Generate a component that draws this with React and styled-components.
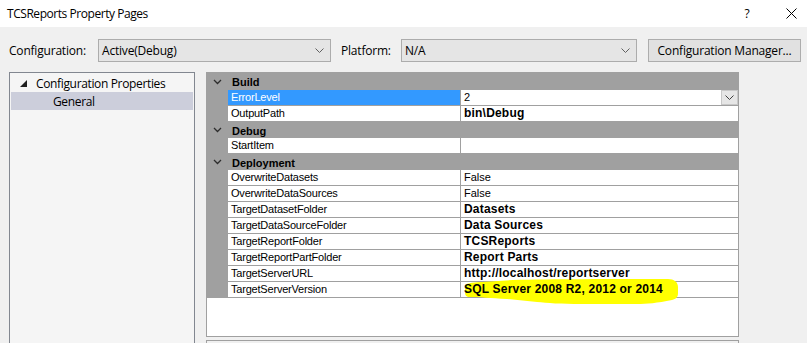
import React from "react";
import styled, { createGlobalStyle } from "styled-components";

const GlobalStyle = createGlobalStyle`
  html, body { margin: 0; padding: 0; }
  body {
    width: 807px;
    height: 343px;
    overflow: hidden;
    background: #f0f0f0;
    font-family: "Open Sans", "Noto Sans", sans-serif;
    color: #000;
  }
`;

const Window = styled.div`
  width: 807px;
  height: 343px;
  overflow: hidden;
  display: flex;
  flex-direction: column;
  background: #f0f0f0;
`;

const TitleBar = styled.div`
  height: 27px;
  flex: none;
  background: #ffffff;
  display: flex;
  align-items: center;
  padding-left: 7px;
  font-size: 12px;
`;

const TitleText = styled.div`
  flex: 1;
  letter-spacing: -0.45px;
`;

const TitleButton = styled.div`
  width: ${(p) => p.$w}px;
  height: 27px;
  display: flex;
  align-items: center;
  justify-content: center;
  font-size: 12px;
`;

const Toolbar = styled.div`
  display: flex;
  align-items: center;
  margin-top: 12px;
  padding-left: 9px;
  height: 23px;
  flex: none;
  font-size: 12px;
`;

const Label = styled.div`
  width: ${(p) => p.$w}px;
  flex: none;
  letter-spacing: -0.2px;
`;

const Combo = styled.div`
  box-sizing: border-box;
  width: ${(p) => p.$w}px;
  height: 23px;
  margin-right: ${(p) => p.$mr}px;
  border: 1px solid #acacac;
  background: #e5e5e5;
  display: flex;
  align-items: center;
  padding-left: 3px;
  padding-right: 6px;
  flex: none;
  letter-spacing: -0.2px;
`;

const ComboText = styled.span`
  flex: 1;
`;

const Button = styled.div`
  box-sizing: border-box;
  width: 153px;
  height: 23px;
  border: 1px solid #adadad;
  background: #e1e1e1;
  display: flex;
  align-items: center;
  justify-content: center;
  flex: none;
  letter-spacing: -0.2px;
`;

const Main = styled.div`
  display: flex;
  align-items: flex-start;
  margin-top: 10px;
  padding-left: 9px;
  gap: 11px;
  flex: none;
`;

const Tree = styled.div`
  box-sizing: border-box;
  width: 186px;
  height: 290px;
  flex: none;
  border: 1px solid #828790;
  background: #f5f5f5;
  padding: 1px;
  font-size: 12px;
`;

const TreeRow = styled.div`
  height: 18px;
  display: flex;
  align-items: center;
  padding-left: ${(p) => p.$indent}px;
  background: ${(p) => (p.$selected ? "#cccedb" : "transparent")};
  letter-spacing: -0.35px;
`;

const TreeArrow = styled.svg`
  width: 8px;
  height: 8px;
  margin-right: 8px;
  margin-top: 2px;
`;

const RightColumn = styled.div`
  display: flex;
  flex-direction: column;
  gap: 3px;
  width: 533px;
  flex: none;
`;

const Grid = styled.div`
  box-sizing: border-box;
  width: 533px;
  height: 265px;
  flex: none;
  border: 1px solid #a0a0a0;
  background: #ffffff;
  font-family: "Liberation Sans", Arial, sans-serif;
  font-size: 11px;
  display: flex;
  flex-direction: column;
`;

const CategoryRow = styled.div`
  height: ${(p) => (p.$first ? 17 : 16)}px;
  flex: none;
  background: #a0a0a0;
  display: flex;
  align-items: center;
  font-weight: bold;
`;

const Chevron = styled.svg`
  width: 21px;
  height: 16px;
  flex: none;
`;

const CategoryText = styled.span`
  padding-left: 4px;
  padding-top: 1px;
`;

const PropRow = styled.div`
  height: 16px;
  flex: none;
  display: flex;
`;

const Gutter = styled.div`
  width: 21px;
  flex: none;
  background: #a0a0a0;
`;

const NameCell = styled.div`
  box-sizing: border-box;
  width: 233px;
  height: 16px;
  flex: none;
  border-right: 1px solid #a0a0a0;
  border-bottom: 1px solid #a0a0a0;
  padding-left: 3px;
  line-height: 15px;
  letter-spacing: -0.2px;
  background: ${(p) => (p.$selected ? "#3399ff" : "#ffffff")};
  color: ${(p) => (p.$selected ? "#ffffff" : "#000000")};
  white-space: nowrap;
`;

const ValueCell = styled.div`
  box-sizing: border-box;
  position: relative;
  flex: 1;
  height: 16px;
  border-bottom: 1px solid #a0a0a0;
  padding-left: 3px;
  line-height: 15px;
  display: flex;
  font-weight: ${(p) => (p.$bold ? "bold" : "normal")};
  font-size: ${(p) => (p.$bold ? "12px" : "11px")};
  letter-spacing: ${(p) => (p.$bold ? "0.2px" : "0")};
  white-space: nowrap;
`;

const ValueText = styled.span`
  position: relative;
  z-index: 2;
  flex: 1;
`;

const DropButton = styled.div`
  box-sizing: border-box;
  width: 17px;
  height: 15px;
  flex: none;
  border: 1px solid #c8c8c8;
  background: #e6e6e6;
  display: flex;
  align-items: center;
  justify-content: center;
`;

const Highlight = styled.svg`
  position: absolute;
  left: 0;
  top: 0;
  width: 220px;
  height: 26px;
  overflow: visible;
  z-index: 1;
  pointer-events: none;
`;

const Filler = styled.div`
  flex: 1;
  background: #ffffff;
`;

const Description = styled.div`
  box-sizing: border-box;
  width: 533px;
  height: 60px;
  flex: none;
  border: 1px solid #a0a0a0;
  background: #f0f0f0;
`;

const SmallChevron = ({ color = "#606060" }) => (
  <svg width="9" height="5" viewBox="0 0 9 5">
    <polyline points="0.5,0.5 4.5,4.5 8.5,0.5" fill="none" stroke={color} strokeWidth="1" />
  </svg>
);

const categories = [
  {
    name: "Build",
    props: [
      { name: "ErrorLevel", value: "2", selected: true, dropdown: true },
      { name: "OutputPath", value: "bin\\Debug", bold: true },
    ],
  },
  {
    name: "Debug",
    props: [{ name: "StartItem", value: "" }],
  },
  {
    name: "Deployment",
    props: [
      { name: "OverwriteDatasets", value: "False" },
      { name: "OverwriteDataSources", value: "False" },
      { name: "TargetDatasetFolder", value: "Datasets", bold: true },
      { name: "TargetDataSourceFolder", value: "Data Sources", bold: true },
      { name: "TargetReportFolder", value: "TCSReports", bold: true },
      { name: "TargetReportPartFolder", value: "Report Parts", bold: true },
      { name: "TargetServerURL", value: "http://localhost/reportserver", bold: true },
      { name: "TargetServerVersion", value: "SQL Server 2008 R2, 2012 or 2014", bold: true, highlight: true },
    ],
  },
];

export default function App() {
  return (
    <>
      <GlobalStyle />
      <Window>
        <TitleBar>
          <TitleText>TCSReports Property Pages</TitleText>
          <TitleButton $w={56}>?</TitleButton>
          <TitleButton $w={32}>
            <svg width="11" height="11" viewBox="0 0 11 11">
              <line x1="0.5" y1="0.5" x2="10.5" y2="10.5" stroke="#000" strokeWidth="1" />
              <line x1="10.5" y1="0.5" x2="0.5" y2="10.5" stroke="#000" strokeWidth="1" />
            </svg>
          </TitleButton>
        </TitleBar>

        <Toolbar>
          <Label $w={89}>Configuration:</Label>
          <Combo $w={233} $mr={10}>
            <ComboText>Active(Debug)</ComboText>
            <SmallChevron />
          </Combo>
          <Label $w={60}>Platform:</Label>
          <Combo $w={236} $mr={11}>
            <ComboText>N/A</ComboText>
            <SmallChevron />
          </Combo>
          <Button>Configuration Manager...</Button>
        </Toolbar>

        <Main>
          <Tree>
            <TreeRow $indent={9}>
              <TreeArrow viewBox="0 0 8 8">
                <polygon points="7,0 7,7 0,7" fill="#1e1e1e" />
              </TreeArrow>
              Configuration Properties
            </TreeRow>
            <TreeRow $indent={42} $selected>
              General
            </TreeRow>
          </Tree>

          <RightColumn>
            <Grid>
              {categories.map((cat, ci) => (
                <React.Fragment key={cat.name}>
                  <CategoryRow $first={ci === 0}>
                    <Chevron viewBox="0 0 21 16">
                      <polyline points="7,6 10.5,9.5 14,6" fill="none" stroke="#2d2d2d" strokeWidth="1.3" />
                    </Chevron>
                    <CategoryText>{cat.name}</CategoryText>
                  </CategoryRow>
                  {cat.props.map((p) => (
                    <PropRow key={p.name}>
                      <Gutter />
                      <NameCell $selected={p.selected}>{p.name}</NameCell>
                      <ValueCell $bold={p.bold}>
                        {p.highlight && (
                          <Highlight viewBox="0 0 220 26">
                            <path
                              d="M4,3 C6,1 14,0 22,0 L52,-2 C90,-3 150,-3 207,-3 C213,-3 217,0 217,5 L217,11 C217,15 215,17 211,18 C196,21 186,22 176,22 L120,22 C100,22 86,21 76,20 L46,17 C30,16 18,15 9,15 C5,15 4,13 4,10 Z"
                              fill="#ffff00"
                            />
                          </Highlight>
                        )}
                        <ValueText>{p.value}</ValueText>
                        {p.dropdown && (
                          <DropButton>
                            <SmallChevron color="#404040" />
                          </DropButton>
                        )}
                      </ValueCell>
                    </PropRow>
                  ))}
                </React.Fragment>
              ))}
              <Filler />
            </Grid>
            <Description />
          </RightColumn>
        </Main>
      </Window>
    </>
  );
}
